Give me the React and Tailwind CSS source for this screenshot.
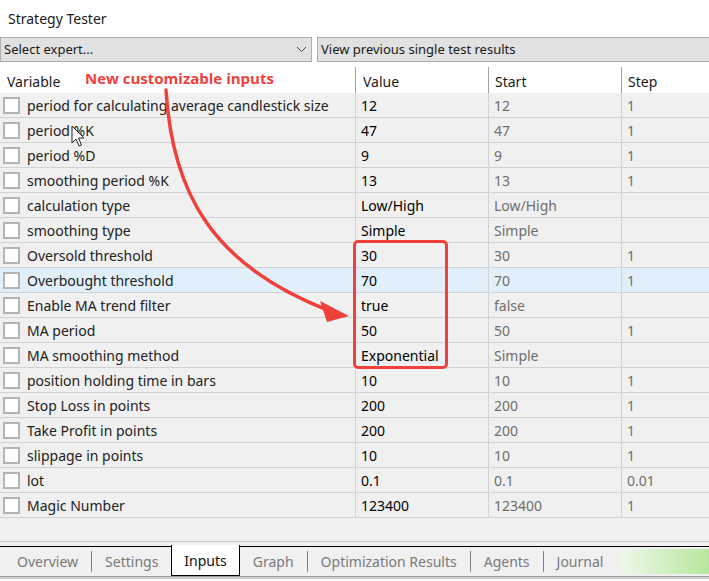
import React from 'react';

const rows = [
  ['period for calculating average candlestick size', '12', '12', '1'],
  ['period %K', '47', '47', '1'],
  ['period %D', '9', '9', '1'],
  ['smoothing period %K', '13', '13', '1'],
  ['calculation type', 'Low/High', 'Low/High', ''],
  ['smoothing type', 'Simple', 'Simple', ''],
  ['Oversold threshold', '30', '30', '1'],
  ['Overbought threshold', '70', '70', '1'],
  ['Enable MA trend filter', 'true', 'false', ''],
  ['MA period', '50', '50', '1'],
  ['MA smoothing method', 'Exponential', 'Simple', ''],
  ['position holding time in bars', '10', '10', '1'],
  ['Stop Loss in points', '200', '200', '1'],
  ['Take Profit in points', '200', '200', '1'],
  ['slippage in points', '10', '10', '1'],
  ['lot', '0.1', '0.1', '0.01'],
  ['Magic Number', '123400', '123400', '1'],
];

const tabs = ['Overview', 'Settings', 'Inputs', 'Graph', 'Optimization Results', 'Agents', 'Journal'];

function Tabs() {
  return (
    <div className="flex h-[30px] items-stretch whitespace-nowrap border-t border-black bg-[#f0f0f0] text-[14px] text-[#7a7a7a]">
      <div className="w-[4px]" />
      {tabs.map((t, i) => {
        const active = t === 'Inputs';
        const nextActive = tabs[i + 1] === 'Inputs';
        return (
          <div key={t} className="flex items-stretch">
            <div
              className={
                active
                  ? 'relative -mt-[2px] flex items-center border border-black border-t-0 bg-white px-[12px] text-[#111]'
                  : 'flex items-center px-[13px]'
              }
            >
              {t}
            </div>
            {!active && !nextActive && i < tabs.length - 1 && (
              <div className="my-[4px] w-px bg-[#808080]" />
            )}
          </div>
        );
      })}
      <div className="flex-1" />
      <div className="my-[2px] w-[89px] bg-gradient-to-r from-[#eef7ea] to-[#b6e69c]" />
    </div>
  );
}

export default function App() {
  return (
    <div
      className="relative h-[581px] w-[709px] overflow-hidden bg-white text-[#1a1a1a]"
      style={{ fontFamily: '"Noto Sans", "Open Sans", sans-serif' }}
    >
      <div className="flex h-[37px] items-center pl-[8px] text-[14px]">Strategy Tester</div>

      <div className="flex h-[25px] gap-[5px] text-[13px]">
        <div className="flex w-[312px] items-center justify-between border border-[#adadad] bg-[#e1e1e1] pl-[3px] pr-[4px]">
          <span>Select expert...</span>
          <svg width="11" height="7" viewBox="0 0 11 7" fill="none">
            <path d="M1 1 L5.5 5.5 L10 1" stroke="#444" strokeWidth="1" />
          </svg>
        </div>
        <div className="flex flex-1 items-center border border-[#adadad] border-r-0 bg-[#e1e1e1] pl-[3px]">
          View previous single test results
        </div>
      </div>

      <div className="mt-[5px] grid h-[26px] grid-cols-[355px_133px_133px_1fr] text-[14px]">
        <div className="flex items-center pl-[7px] pt-[2px]">Variable</div>
        <div className="flex items-center border-l border-[#a0a0a0] pl-[7px] pt-[2px]">Value</div>
        <div className="flex items-center border-l border-[#a0a0a0] pl-[6px] pt-[2px]">Start</div>
        <div className="flex items-center border-l border-[#a0a0a0] pl-[6px] pt-[2px]">Step</div>
      </div>

      <div className="bg-[#f0f0f0] text-[14px]">
        {rows.map((r, i) => (
          <div
            key={r[0]}
            className={
              'grid h-[25px] grid-cols-[355px_133px_133px_1fr] border-b border-[#d2d2d2] ' +
              (i === 7 ? 'bg-[#e1effa]' : '')
            }
          >
            <div className="flex items-center gap-[7px] pl-[3px]">
              <div className="h-[17px] w-[17px] border-2 border-[#b4b4b4] bg-white" />
              <span className="text-[#222]">{r[0]}</span>
            </div>
            <div className="flex items-center border-l border-[#d2d2d2] pl-[5px] text-black">{r[1]}</div>
            <div className="flex items-center border-l border-[#d2d2d2] pl-[5px] text-[#6e6e6e]">{r[2]}</div>
            <div className="flex items-center border-l border-[#d2d2d2] pl-[5px] text-[#6e6e6e]">{r[3]}</div>
          </div>
        ))}
        <div className="h-[24px] border-b border-[#c8c8c8]" />
        <div className="h-[4px]" />
      </div>

      <Tabs />
      <div className="h-[3px] border-t border-[#9a9a9a] bg-[#d0d0d0]" />

      {/* annotation overlay */}
      <div
        className="absolute left-[85px] top-[67px] text-[15px] font-bold text-[#f0403c]"
        style={{ fontFamily: '"Open Sans", "Noto Sans", sans-serif' }}
      >
        New customizable inputs
      </div>
      <div className="absolute left-[353px] top-[240px] h-[129px] w-[95px] rounded-[5px] border-[3px] border-[#f0403c]" />
      <svg className="absolute left-0 top-0" width="709" height="581" viewBox="0 0 709 581" fill="none">
        <path d="M166 90 C 172 190, 210 265, 330 311" stroke="#f0403c" strokeWidth="3.5" strokeLinecap="round" />
        <path d="M349 316 L320 301 L327 322 Z" fill="#f0403c" />
        <path d="M72 126 L72 143 L76 139 L79 146 L81.5 145 L78.5 138 L84 138 Z" fill="white" stroke="#222" strokeWidth="1" strokeLinejoin="round" />
      </svg>
    </div>
  );
}
